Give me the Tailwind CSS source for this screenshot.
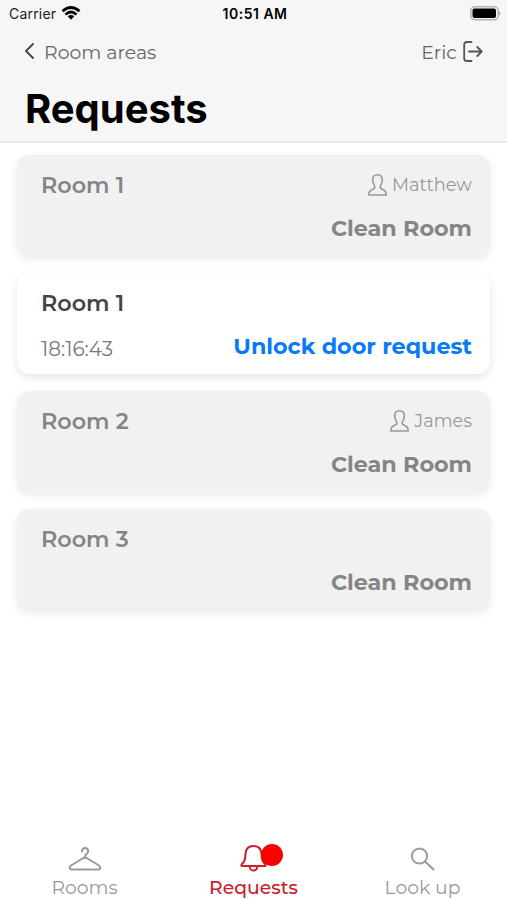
<!DOCTYPE html>
<html lang="en">
<head>
<meta charset="utf-8">
<title>Requests</title>
<script src="https://cdn.jsdelivr.net/npm/@tailwindcss/browser@4"></script>
</head>
<body class="bg-white">
<div class="flex h-[900px] w-[507px] flex-col overflow-hidden bg-white font-['Montserrat','Inter',sans-serif] whitespace-nowrap">
  <header class="h-[143px] shrink-0 border-b-2 border-[#e9e9e9] bg-[#f6f6f6]">
    <div class="flex h-7 items-center justify-between pr-[6px] pb-[1px] pl-[9px] font-['Inter',sans-serif] text-[14px] text-[#222]">
      <div class="flex flex-1 items-center gap-[5px]"><span class="tracking-[0.2px]">Carrier</span>
        <svg class="-mt-[1px] h-[14px] w-[20px]" viewBox="0 0 20 14" fill="none" stroke="#000" stroke-width="2.700"><path d="M1.500 5.200Q10-2.200 18.500 5.200M4.500 8.400Q10 3.600 15.500 8.400"/><path d="M6.700 10.300Q10 7.700 13.300 10.300L10 13.700Z" fill="#000" stroke="none"/></svg>
      </div>
      <span class="text-center text-[14px] font-semibold tracking-[0.5px] text-black">10:51 AM</span>
      <div class="flex flex-1 justify-end"><svg class="h-[15px] w-[31px]" viewBox="0 0 31 15"><rect x=".8" y=".8" width="27.400" height="13" rx="4" fill="#f6f6f6" stroke="#b5b5b5" stroke-width="1.600"/><rect x="2.500" y="2.500" width="23.500" height="9.600" rx="2" fill="#000"/><path d="M29 5q3 2.300 0 4.600z" fill="#aaa"/></svg></div>
    </div>
    <div class="flex h-[49px] items-center justify-between pr-[24px] pl-[24px] text-[18.900px] text-[#666]">
      <div class="flex items-center gap-[9px]">
        <svg class="-mt-[2px] h-[16px] w-[11px]" viewBox="0 0 11 16" fill="none" stroke="#444" stroke-width="1.800" stroke-linecap="round" stroke-linejoin="round"><path d="M9 1 2 8l7 7"/></svg>
        <span class="pt-[2px]">Room areas</span>
      </div>
      <div class="flex items-center gap-[6px]"><span class="pt-[2px]">Eric</span>
        <svg class="-mt-px h-[21px] w-[20px]" viewBox="0 0 20 21" fill="none" stroke="#555" stroke-width="1.800" stroke-linecap="round" stroke-linejoin="round"><path d="M8.500 1H4Q1.200 1 1.200 3.500v14Q1.200 20 4 20h4.500M6 10.500H18.800M14.300 6 18.800 10.500l-4.500 4.500"/></svg>
      </div>
    </div>
    <h1 class="pl-[25px] font-['Inter',sans-serif] text-[40px] leading-[64px] font-bold text-black">Requests</h1>
  </header>

  <main class="flex flex-1 flex-col gap-[17px] px-[17px] pt-[12px]">
    <section class="flex h-[101px] shrink-0 flex-col justify-between rounded-[13px] bg-[#f1f1f1] pt-[15px] pr-[18px] pb-[13px] pl-[24px] shadow-[0_3px_8px_rgba(0,0,0,0.09)]">
      <div class="flex h-[30px] items-center justify-between"><h2 class="text-[22.300px] leading-[30px] font-semibold text-[#858585]">Room 1</h2>
        <div class="flex items-center gap-[5px] text-[17.800px] text-[#999]"><svg class="h-[22px] w-[19px]" viewBox="0 0 19 22" fill="none" stroke="#999" stroke-width="1.600" stroke-linejoin="round"><path d="M9.500.8C6.300.8 4.700 2.700 4.700 5.700c0 2.500.6 4.500 2 6.300.5 1.800-.3 2.700-2.500 3.500C1.500 16.500.8 18 .8 21h17.400c0-3-.7-4.500-3.400-5.500-2.200-.8-3-1.700-2.500-3.500 1.400-1.800 2-3.800 2-6.300C14.300 2.700 12.700.8 9.500.8Z"/></svg><span>Matthew</span></div>
      </div>
      <p class="text-right text-[22.300px] leading-[30px] font-bold text-[#858585]">Clean Room</p>
    </section>
    <section class="flex h-[101px] shrink-0 flex-col justify-between rounded-[13px] bg-white pt-[15px] pr-[18px] pb-[13px] pl-[24px] shadow-[0_3px_8px_rgba(0,0,0,0.11)]">
      <h2 class="text-[22.300px] leading-[30px] font-semibold text-[#444]">Room 1</h2>
      <div class="flex h-[30px] items-center justify-between leading-[30px]"><span class="pt-[5px] text-[20px] text-[#777]">18:16:43</span><span class="text-[22.300px] font-bold text-[#087af5]">Unlock door request</span></div>
    </section>
    <section class="flex h-[101px] shrink-0 flex-col justify-between rounded-[13px] bg-[#f1f1f1] pt-[15px] pr-[18px] pb-[13px] pl-[24px] shadow-[0_3px_8px_rgba(0,0,0,0.09)]">
      <div class="flex h-[30px] items-center justify-between"><h2 class="text-[22.300px] leading-[30px] font-semibold text-[#858585]">Room 2</h2>
        <div class="flex items-center gap-[5px] text-[17.800px] text-[#999]"><svg class="h-[22px] w-[19px]" viewBox="0 0 19 22" fill="none" stroke="#999" stroke-width="1.600" stroke-linejoin="round"><path d="M9.500.8C6.300.8 4.700 2.700 4.700 5.700c0 2.500.6 4.500 2 6.300.5 1.800-.3 2.700-2.500 3.500C1.500 16.500.8 18 .8 21h17.400c0-3-.7-4.500-3.400-5.500-2.200-.8-3-1.700-2.500-3.500 1.400-1.800 2-3.800 2-6.300C14.300 2.700 12.700.8 9.500.8Z"/></svg><span>James</span></div>
      </div>
      <p class="text-right text-[22.300px] leading-[30px] font-bold text-[#858585]">Clean Room</p>
    </section>
    <section class="flex h-[101px] shrink-0 flex-col justify-between rounded-[13px] bg-[#f1f1f1] pt-[15px] pr-[18px] pb-[13px] pl-[24px] shadow-[0_3px_8px_rgba(0,0,0,0.09)]">
      <h2 class="text-[22.300px] leading-[30px] font-semibold text-[#858585]">Room 3</h2>
      <p class="text-right text-[22.300px] leading-[30px] font-bold text-[#858585]">Clean Room</p>
    </section>
  </main>

  <nav class="grid h-[60px] shrink-0 grid-cols-3 text-[18.800px] text-[#999]">
    <a class="flex flex-col items-center"><svg class="mt-[6px] h-[26px] w-[34px]" viewBox="0 0 34 26" fill="none" stroke="#999" stroke-width="2" stroke-linecap="round" stroke-linejoin="round"><path d="M14 5.500Q14 2 17 2t3.300 3c0 2.500-3.300 2.500-3.300 6L3 19.500C.8 21 1.300 23.500 4 23.500h26c2.700 0 3.200-2.500 1-4L17 11"/></svg><span class="mt-[3px] leading-[26px]">Rooms</span></a>
    <a class="flex flex-col items-center text-[#c8202c]"><span class="relative mt-[4px] h-[28px] w-[27px]"><svg class="h-[28px] w-[27px]" viewBox="0 0 27 28" fill="none" stroke="#c8202c" stroke-width="2" stroke-linecap="round" stroke-linejoin="round"><path d="M13.500 2C8 2 5.700 5.500 5.500 10c-.2 5-.5 7-4 10.500V22h24v-1.500C22 17 21.700 15 21.500 10 21.300 5.500 19 2 13.500 2ZM9.500 22c.3 3 2 4.500 4 4.500s3.700-1.500 4-4.500"/></svg><i class="absolute top-0 left-[21px] h-[22px] w-[22px] rounded-full bg-[#ff0000]"></i></span><span class="mt-[3px] leading-[26px] font-medium">Requests</span></a>
    <a class="flex flex-col items-center"><svg class="mt-[7px] h-[25px] w-[25px]" viewBox="0 0 25 25" fill="none" stroke="#999" stroke-width="2" stroke-linecap="round"><circle cx="9.500" cy="9" r="7.600"/><path d="m15 14.500 8.500 8"/></svg><span class="mt-[3px] leading-[26px]">Look up</span></a>
  </nav>
</div>
</body>
</html>
